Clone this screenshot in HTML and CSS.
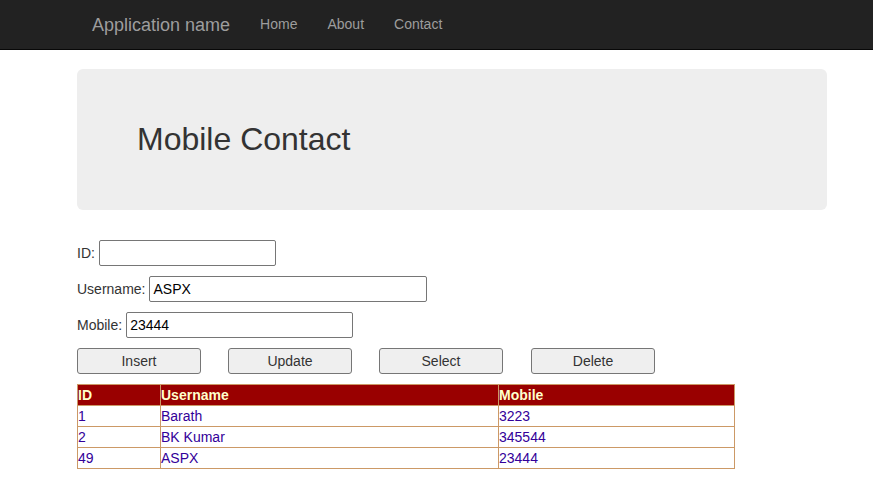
FILE: index.html
```html
<!DOCTYPE html>
<html>
<head>
<meta charset="utf-8">
<title>Mobile Contact</title>
<link rel="stylesheet" href="styles.css">
</head>
<body>
<div class="navbar">
  <div class="container nav-inner">
    <a class="brand" href="#">Application name</a>
    <ul class="nav">
      <li><a href="#">Home</a></li>
      <li><a href="#">About</a></li>
      <li><a href="#">Contact</a></li>
    </ul>
  </div>
</div>
<div class="container">
  <div class="jumbotron">
    <h1>Mobile Contact</h1>
  </div>
  <form class="contact-form">
    <div class="form-row"><label>ID:</label><input type="text" class="in-id" value=""></div>
    <div class="form-row"><label>Username:</label><input type="text" class="in-user" value="ASPX"></div>
    <div class="form-row"><label>Mobile:</label><input type="text" class="in-mobile" value="23444"></div>
    <div class="buttons">
      <button type="button">Insert</button>
      <button type="button">Update</button>
      <button type="button">Select</button>
      <button type="button" class="btn-last">Delete</button>
    </div>
  </form>
  <table class="grid">
    <thead>
      <tr><th class="c-id">ID</th><th class="c-user">Username</th><th class="c-mobile">Mobile</th></tr>
    </thead>
    <tbody>
      <tr><td>1</td><td>Barath</td><td>3223</td></tr>
      <tr><td>2</td><td>BK Kumar</td><td>345544</td></tr>
      <tr><td>49</td><td>ASPX</td><td>23444</td></tr>
    </tbody>
  </table>
</div>
</body>
</html>
```
FILE: styles.css
```css
* { box-sizing: border-box; }
html, body { margin: 0; padding: 0; }
body {
  font-family: "Liberation Sans", Arial, sans-serif;
  font-size: 14px;
  line-height: 20px;
  color: #333;
  background: #fff;
}
.container {
  width: 750px;
  margin: 0 0 0 77px;
  padding: 0;
}
.navbar {
  height: 50px;
  background: #222;
  border-bottom: 1px solid #080808;
}
.nav-inner {
  display: flex;
  align-items: center;
  height: 49px;
}
.brand {
  font-size: 18px;
  line-height: 20px;
  padding: 15px;
  color: #9d9d9d;
  text-decoration: none;
}
.nav {
  display: flex;
  list-style: none;
  margin: 0;
  padding: 0;
}
.nav a {
  display: block;
  padding: 15px;
  color: #9d9d9d;
  text-decoration: none;
  font-size: 14px;
  line-height: 19px;
}
.jumbotron {
  margin-top: 19px;
  margin-bottom: 30px;
  background: #eee;
  border-radius: 6px;
  padding: 48px 60px;
}
.jumbotron h1 {
  margin: 0;
  font-size: 32px;
  font-weight: normal;
  line-height: 45px;
  color: #333;
}
.contact-form { margin: 0; }
.form-row {
  display: flex;
  align-items: center;
  height: 26px;
  margin-bottom: 10px;
}
.form-row label { color: #333; margin-right: 4px; }
.form-row input {
  height: 26px;
  border: 1px solid #767676;
  border-radius: 2px;
  padding: 1px 3px;
  font-family: "Liberation Sans", Arial, sans-serif;
  font-size: 14px;
  color: #000;
  margin: 0;
}
.in-id { width: 177px; }
.in-user { width: 278px; }
.in-mobile { width: 227px; }
.buttons {
  display: flex;
  gap: 27px;
  height: 26px;
  margin-bottom: 10px;
}
.buttons button {
  width: 124px;
  height: 26px;
  margin: 0;
  padding: 0;
  background: #efefef;
  border: 1px solid #767676;
  border-radius: 3px;
  font-family: "Liberation Sans", Arial, sans-serif;
  font-size: 14px;
  color: #333;
}
.buttons .btn-last { margin-left: 1px; }
.grid {
  border-collapse: collapse;
  width: 657px;
  table-layout: fixed;
}
.grid th, .grid td {
  border: 1px solid #cc9966;
  padding: 0;
  line-height: 20px;
  text-align: left;
  white-space: nowrap;
}
.grid th {
  background: #990000;
  color: #ffffcc;
  font-weight: bold;
}
.grid td {
  background: #fff;
  color: #330099;
}
.c-id { width: 83px; }
.c-user { width: 338px; }
.c-mobile { width: 236px; }
```
